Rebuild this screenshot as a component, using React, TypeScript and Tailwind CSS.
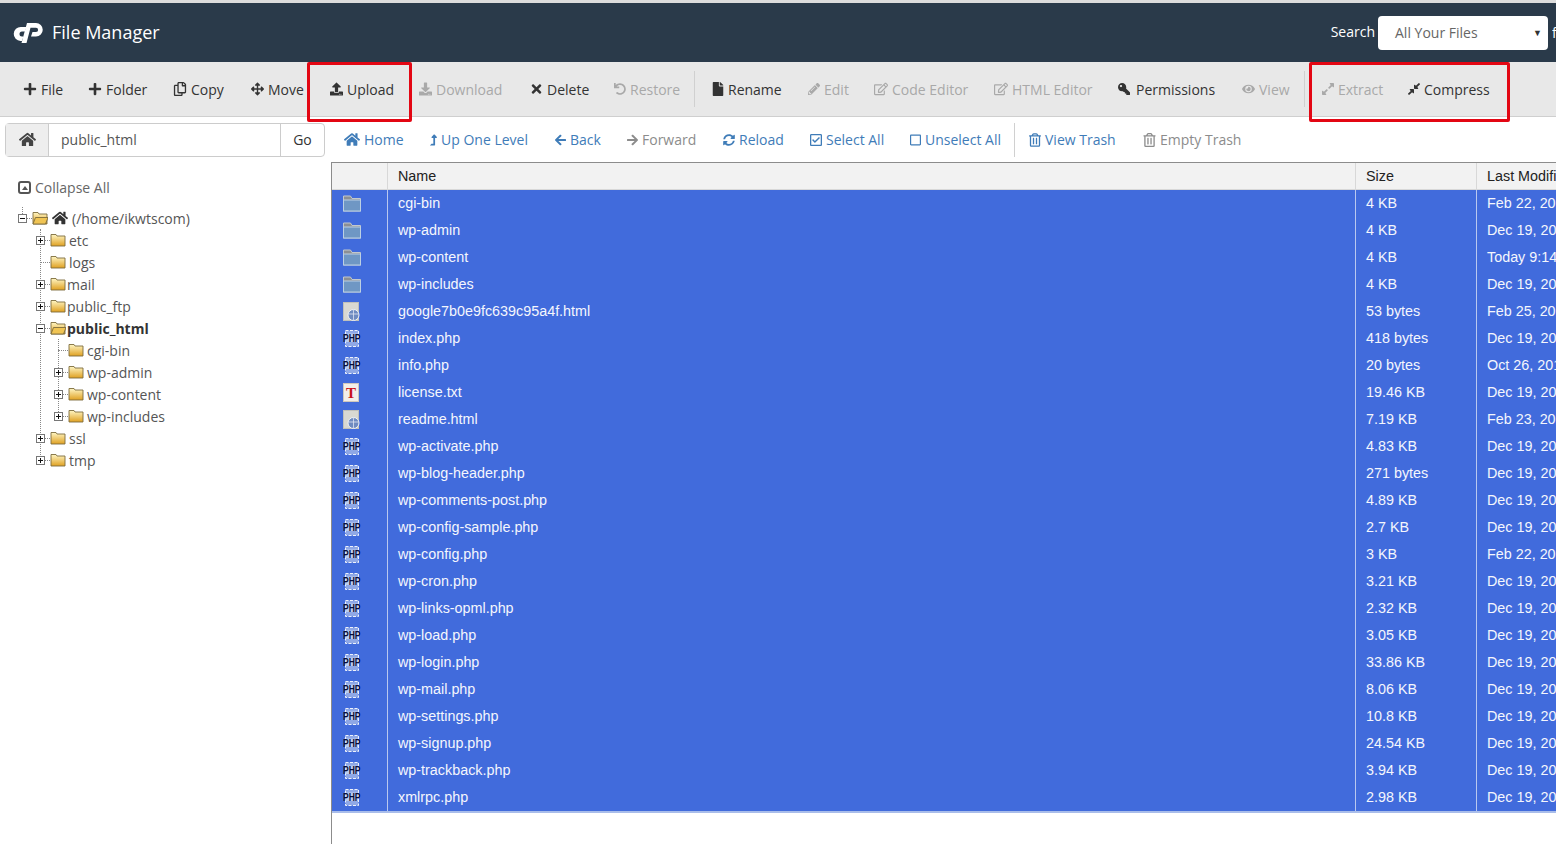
import type { ReactNode } from 'react'
import {
  FaPlus, FaRegCopy, FaArrowsAlt, FaDownload, FaTimes, FaUndo, FaFile, FaPencilAlt, FaRegEdit, FaKey, FaEye,
  FaExpandAlt, FaCompressAlt, FaHome, FaLevelUpAlt, FaArrowLeft, FaArrowRight, FaSyncAlt, FaRegCheckSquare,
  FaRegSquare, FaRegTrashAlt, FaUpload,
} from 'react-icons/fa'

const toolbar = [
  { label: 'File', icon: <FaPlus />, w: 'w-[65px]', iw: 'w-[14px]' },
  { label: 'Folder', icon: <FaPlus />, w: 'w-[85px]', iw: 'w-[14px]' },
  { label: 'Copy', icon: <FaRegCopy />, w: 'w-[78px]', iw: 'w-[14px]' },
  { label: 'Move', icon: <FaArrowsAlt />, w: 'w-[79px]', iw: 'w-[13px]' },
  { label: 'Upload', icon: <FaUpload />, w: 'w-[89px]', iw: 'w-[13px]' },
  { label: 'Download', icon: <FaDownload />, w: 'w-[111px]', iw: 'w-[13px]', off: true },
  { label: 'Delete', icon: <FaTimes />, w: 'w-[84px]', iw: 'w-[13px]' },
  { label: 'Restore', icon: <FaUndo />, w: 'w-[80px]', iw: 'w-[12px]', off: true, sep: true },
  { label: 'Rename', icon: <FaFile />, w: 'w-[96px]', iw: 'w-[12px]' },
  { label: 'Edit', icon: <FaPencilAlt />, w: 'w-[66px]', iw: 'w-[12px]', off: true },
  { label: 'Code Editor', icon: <FaRegEdit />, w: 'w-[120px]', iw: 'w-[14px]', off: true },
  { label: 'HTML Editor', icon: <FaRegEdit />, w: 'w-[124px]', iw: 'w-[14px]', off: true },
  { label: 'Permissions', icon: <FaKey className="-scale-x-100 text-[12px]" />, w: 'w-[124px]', iw: 'w-[14px]' },
  { label: 'View', icon: <FaEye />, w: 'w-[62px]', iw: 'w-[13px]', off: true, sep: true },
  { label: 'Extract', icon: <FaExpandAlt />, w: 'w-[86px]', iw: 'w-[12px]', off: true },
  { label: 'Compress', icon: <FaCompressAlt />, w: 'w-[100px]', iw: 'w-[12px]' },
]

const navItems = [
  { label: 'Home', icon: <FaHome className="text-[17px]" />, w: 'w-[86px]', iw: 'w-[16px]' },
  { label: 'Up One Level', icon: <FaLevelUpAlt className="text-[12px]" />, w: 'w-[125px]', iw: 'w-[7px]' },
  { label: 'Back', icon: <FaArrowLeft />, w: 'w-[72px]', iw: 'w-[11px]' },
  { label: 'Forward', icon: <FaArrowRight />, w: 'w-[96px]', iw: 'w-[11px]', off: true },
  { label: 'Reload', icon: <FaSyncAlt />, w: 'w-[87px]', iw: 'w-[12px]' },
  { label: 'Select All', icon: <FaRegCheckSquare />, w: 'w-[100px]', iw: 'w-[12px]' },
  { label: 'Unselect All', icon: <FaRegSquare />, w: 'w-[104px]', iw: 'w-[11px]', sep: true },
  { label: 'View Trash', icon: <FaRegTrashAlt />, w: 'w-[114px]', iw: 'w-[12px]' },
  { label: 'Empty Trash', icon: <FaRegTrashAlt />, w: 'w-[110px]', iw: 'w-[13px]', off: true },
]

const files = [
  ['dir', 'cgi-bin', '4 KB', 'Feb 22, 2018'],
  ['dir', 'wp-admin', '4 KB', 'Dec 19, 2017'],
  ['dir', 'wp-content', '4 KB', 'Today 9:14'],
  ['dir', 'wp-includes', '4 KB', 'Dec 19, 2017'],
  ['html', 'google7b0e9fc639c95a4f.html', '53 bytes', 'Feb 25, 2018'],
  ['php', 'index.php', '418 bytes', 'Dec 19, 2017'],
  ['php', 'info.php', '20 bytes', 'Oct 26, 2017'],
  ['txt', 'license.txt', '19.46 KB', 'Dec 19, 2017'],
  ['html', 'readme.html', '7.19 KB', 'Feb 23, 2018'],
  ['php', 'wp-activate.php', '4.83 KB', 'Dec 19, 2017'],
  ['php', 'wp-blog-header.php', '271 bytes', 'Dec 19, 2017'],
  ['php', 'wp-comments-post.php', '4.89 KB', 'Dec 19, 2017'],
  ['php', 'wp-config-sample.php', '2.7 KB', 'Dec 19, 2017'],
  ['php', 'wp-config.php', '3 KB', 'Feb 22, 2018'],
  ['php', 'wp-cron.php', '3.21 KB', 'Dec 19, 2017'],
  ['php', 'wp-links-opml.php', '2.32 KB', 'Dec 19, 2017'],
  ['php', 'wp-load.php', '3.05 KB', 'Dec 19, 2017'],
  ['php', 'wp-login.php', '33.86 KB', 'Dec 19, 2017'],
  ['php', 'wp-mail.php', '8.06 KB', 'Dec 19, 2017'],
  ['php', 'wp-settings.php', '10.8 KB', 'Dec 19, 2017'],
  ['php', 'wp-signup.php', '24.54 KB', 'Dec 19, 2017'],
  ['php', 'wp-trackback.php', '3.94 KB', 'Dec 19, 2017'],
  ['php', 'xmlrpc.php', '2.98 KB', 'Dec 19, 2017'],
]

function Logo() {
  return (
    <svg width="31" height="21" viewBox="1 0 31 21" fill="white">
      <path d="M9 5h5.5l-1.6 4.5H10a2.5 2.5 0 0 0 0 5h1.5L10 19H8.5A7 7 0 0 1 9 5z" />
      <path d="M15 1h9a6.7 6.7 0 0 1 0 13.5h-5l1.5-4.5H24a2.1 2.1 0 0 0 0-4.2h-5.5L14.5 21H9.5z" />
    </svg>
  )
}

function Folder({ open }: { open?: boolean }) {
  return (
    <svg width="16" height="14" viewBox="0 0 16 14" className="shrink-0">
      <defs>
        <linearGradient id="fold" x1="0" y1="0" x2="0" y2="1">
          <stop offset="0" stopColor="#fff6c4" />
          <stop offset="1" stopColor="#dfa021" />
        </linearGradient>
      </defs>
      <path d="M1 1.5h5l1 1.5h8v10H1z" fill="url(#fold)" stroke="#7d6c3c" strokeWidth="0.9" />
      {open && <path d="M1 13l2.5-6.5H16L13.5 13z" fill="#f0c453" stroke="#7d6c3c" strokeWidth="0.9" />}
    </svg>
  )
}

function Toggle({ kind }: { kind?: 'plus' | 'minus' }) {
  if (!kind) return <span className="w-[4px] shrink-0" />
  return (
    <svg width="9" height="9" viewBox="0 0 9 9" className="shrink-0">
      <rect x="0.5" y="0.5" width="8" height="8" fill="#fff" stroke="#777" />
      <path d="M2 4.5h5" stroke="#111" />
      {kind === 'plus' && <path d="M4.5 2v5" stroke="#111" />}
    </svg>
  )
}

function TreeRow({ depth, toggle, text, gap, bold, home, open }: {
  depth: 0 | 1 | 2
  toggle?: 'plus' | 'minus'
  text: string
  gap: string
  bold?: boolean
  home?: boolean
  open?: boolean
}) {
  const pad = depth === 0 ? 'pl-[18px]' : depth === 1 ? 'pl-[36px]' : 'pl-[54px]'
  return (
    <div className={`flex h-[22px] items-center ${pad}`}>
      <Toggle kind={toggle} />
      <span className={`${toggle ? 'w-[5px]' : 'w-[10px]'} shrink-0 border-t border-dotted border-[#888]`} />
      <Folder open={open} />
      {home && <FaHome className="ml-[4px] text-[16px] text-[#333]" />}
      <span className={`${gap} ${bold ? 'font-bold text-[#333]' : 'text-[#555]'}`}>{text}</span>
    </div>
  )
}

function FileIcon({ type }: { type: string }) {
  if (type === 'dir') {
    return (
      <svg width="20" height="17" viewBox="1 0 20 17">
        <path d="M1.5 1h7l1.5 2.5h8.5V16h-17z" fill="#8b8f94" stroke="#c2c8cd" />
        <rect x="1.5" y="5" width="17" height="11" fill="#6f97c4" stroke="#bcd0e3" />
      </svg>
    )
  }
  if (type === 'php') {
    return (
      <svg width="18" height="17" viewBox="0 0 18 17">
        <rect x="2.5" y="0.5" width="13" height="16" fill="#8fa8e6" stroke="#eef2fb" strokeDasharray="3 1.5" />
        <rect x="1" y="3.5" width="15" height="8.5" fill="#e4eafa" opacity="0.55" />
        <text transform="translate(0 11.5) scale(1 1.25)" fontFamily="Liberation Sans, sans-serif" fontSize="8.5" fontWeight="700" fill="#070c38">PHP</text>
      </svg>
    )
  }
  if (type === 'txt') {
    return (
      <svg width="16" height="19" viewBox="0 0 16 19">
        <rect x="0.5" y="0.5" width="15" height="18" fill="#f3efe8" stroke="#cfc8bd" />
        <text x="3" y="15" fontFamily="Liberation Serif, serif" fontSize="15" fontWeight="700" fill="#c8141c">T</text>
      </svg>
    )
  }
  return (
    <svg width="18" height="20" viewBox="0 0 18 20">
      <rect x="0.5" y="0.5" width="15" height="18" fill="#d8d8d2" stroke="#c0c0ba" />
      <circle cx="10.5" cy="13" r="5.5" fill="#6f8bc0" stroke="#eef1f6" />
      <path d="M5.5 12h10M10.5 8v10" stroke="#dfe5f2" strokeWidth="0.8" />
    </svg>
  )
}

function Sep({ h }: { h: string }) {
  return <span className={`${h} w-px bg-[#d0d0d0]`} />
}

function ToolItem({ icon, label, w, iw, off }: { icon: ReactNode; label: string; w: string; iw: string; off?: boolean }) {
  return (
    <div className={`flex shrink-0 items-center gap-[4px] ${w} ${off ? 'text-[#a9a9a9]' : 'text-[#333]'}`}>
      <span className={`flex ${iw} text-[14px]`}>{icon}</span>
      <span className="whitespace-nowrap">{label}</span>
    </div>
  )
}

export default function App() {
  return (
    <div className="relative flex h-[844px] w-full flex-col overflow-hidden bg-white font-['Open_Sans',sans-serif] text-[14px]">
      <div className="h-[3px] bg-[#dcdcdc]" />

      <header className="flex h-[59px] items-center justify-between bg-[#2a3a4a] pl-[13px] text-white">
        <div className="flex items-center gap-[8px]">
          <Logo />
          <span className="text-[18px]">File Manager</span>
        </div>
        <div className="flex items-center">
          <span className="mr-[3px] -mt-[2px]">Search</span>
          <div className="flex h-[34px] w-[170px] items-center justify-between rounded bg-white pl-[17px] pr-[6px] text-[#666]">
            All Your Files
            <span className="text-[9px] text-[#333]">▼</span>
          </div>
          <span className="ml-[4px] w-[4px] overflow-hidden">f</span>
        </div>
      </header>

      <div className="flex h-[55px] items-center border-b border-[#cfcfcf] bg-[#e8e8e8] pl-[23px]">
        {toolbar.map((t) => (
          <div key={t.label} className="flex items-center">
            <ToolItem {...t} />
            {t.sep && <span className="mr-[17px]"><Sep h="block h-[36px]" /></span>}
          </div>
        ))}
      </div>

      <div className="flex h-[45px] items-center">
        <div className="ml-[5px] flex h-[34px] w-[320px] rounded border border-[#ccc] text-[#555]">
          <div className="flex w-[43px] items-center justify-center border-r border-[#ccc] bg-[#eee] text-[17px] text-[#444]"><FaHome /></div>
          <div className="flex flex-1 items-center pl-[12px]">public_html</div>
          <div className="flex w-[44px] items-center justify-center border-l border-[#ccc] text-[#333]">Go</div>
        </div>
        <div className="ml-[19px] flex items-center">
          {navItems.map((n) => (
            <div key={n.label} className="flex items-center">
              <div className={`flex shrink-0 items-center gap-[4px] ${n.w} ${n.off ? 'text-[#8c8c8c]' : 'text-[#3f7cb8]'}`}>
                <span className={`flex ${n.iw} text-[14px]`}>{n.icon}</span>
                <span className="whitespace-nowrap">{n.label}</span>
              </div>
              {n.sep && <span className="mr-[14px]"><Sep h="block h-[34px]" /></span>}
            </div>
          ))}
        </div>
      </div>

      <div className="flex min-h-0 flex-1">
        <aside className="w-[332px] shrink-0 border-r border-[#8c8c8c] pt-[15px] text-[#555]">
          <div className="flex items-center gap-[4px] pl-[18px] text-[#666]">
            <span className="flex h-[13px] w-[13px] items-center justify-center rounded-[3px] border-2 border-[#555]">
              <span className="h-0 w-0 border-x-[3px] border-b-[4px] border-x-transparent border-b-[#555]" />
            </span>
            Collapse All
          </div>
          <div className="relative mt-[9px]">
            <span className="absolute left-[22px] top-0 h-[7px] border-l border-dotted border-[#888]" />
            <span className="absolute left-[40px] top-[22px] h-[232px] border-l border-dotted border-[#888]" />
            <span className="absolute left-[58px] top-[132px] h-[77px] border-l border-dotted border-[#888]" />
            <div className="relative">
              <TreeRow depth={0} toggle="minus" text="(/home/ikwtscom)" gap="ml-[4px]" home open />
              <TreeRow depth={1} toggle="plus" text="etc" gap="ml-[3px]" />
              <TreeRow depth={1} text="logs" gap="ml-[3px]" />
              <TreeRow depth={1} toggle="plus" text="mail" gap="ml-[1px]" />
              <TreeRow depth={1} toggle="plus" text="public_ftp" gap="ml-[1px]" />
              <TreeRow depth={1} toggle="minus" text="public_html" gap="ml-[1px]" bold open />
              <TreeRow depth={2} text="cgi-bin" gap="ml-[3px]" />
              <TreeRow depth={2} toggle="plus" text="wp-admin" gap="ml-[3px]" />
              <TreeRow depth={2} toggle="plus" text="wp-content" gap="ml-[3px]" />
              <TreeRow depth={2} toggle="plus" text="wp-includes" gap="ml-[3px]" />
              <TreeRow depth={1} toggle="plus" text="ssl" gap="ml-[3px]" />
              <TreeRow depth={1} toggle="plus" text="tmp" gap="ml-[3px]" />
            </div>
          </div>
        </aside>

        <main className="min-w-0 flex-1 overflow-hidden border-t border-[#8c8c8c] font-['Liberation_Sans',sans-serif] text-[14.35px]">
          <div className="grid h-[27px] grid-cols-[56px_968px_121px_1fr] items-center border-b border-[#d8d8d8] bg-[#f2f2f2] text-[#222]">
            <div className="h-full border-r border-[#d8d8d8]" />
            <div className="flex h-full items-center border-r border-[#d8d8d8] pl-[10px] pt-px">Name</div>
            <div className="flex h-full items-center border-r border-[#d8d8d8] pl-[10px] pt-px">Size</div>
            <div className="whitespace-nowrap pl-[10px] pt-px">Last Modified</div>
          </div>
          <div className="border-b-2 border-[#a9bdea] bg-[#416bdc] text-[#f4f6fd]">
            {files.map(([type, name, size, date]) => (
              <div key={name} className="grid h-[27px] grid-cols-[56px_968px_121px_1fr]">
                <div className="flex items-center border-r border-[#b9c8ef] pl-[11px]"><FileIcon type={type} /></div>
                <div className="flex items-center border-r border-[#b9c8ef] pl-[10px]">{name}</div>
                <div className="flex items-center border-r border-[#b9c8ef] pl-[10px]">{size}</div>
                <div className="flex items-center whitespace-nowrap pl-[10px]">{date}</div>
              </div>
            ))}
          </div>
        </main>
      </div>

      <div className="absolute left-[307px] top-[62px] h-[60px] w-[105px] rounded-[2px] border-[3px] border-[#e30613]" />
      <div className="absolute left-[1309px] top-[62px] h-[60px] w-[201px] rounded-[2px] border-[3px] border-[#e30613]" />
    </div>
  )
}
